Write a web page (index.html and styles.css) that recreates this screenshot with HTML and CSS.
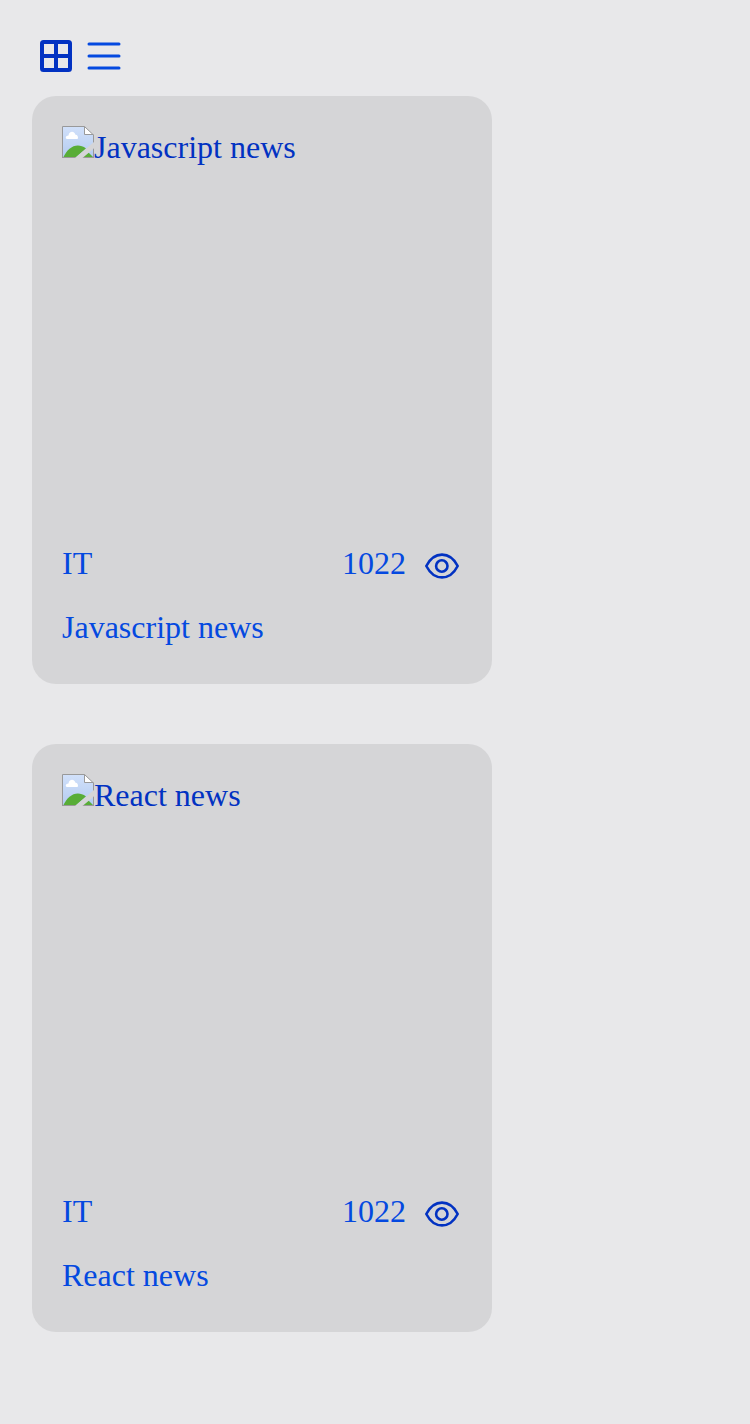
FILE: index.html
```html
<!DOCTYPE html>
<html lang="en">
<head>
<meta charset="utf-8">
<title>Articles</title>
<link rel="stylesheet" href="styles.css">
</head>
<body>
<svg class="symbols" aria-hidden="true">
  <defs>
    <linearGradient id="sky" x1="0" y1="0" x2="0" y2="1">
      <stop offset="0" stop-color="#d2e1fa"/>
      <stop offset="1" stop-color="#b3cbf0"/>
    </linearGradient>
    <symbol id="picture" viewBox="0 0 32 32">
      <path d="M0 0H22L32 10V32H0Z" fill="url(#sky)"/>
      <path d="M5 13C3 12.500 3.500 9.500 6.500 9.500C7 4.800 12.500 4.800 13.200 8.500C15.500 8.500 16.800 11.500 15.500 13Z" fill="#fff"/>
      <path d="M1 32C6 21 15 16 24 22.500L13 32Z" fill="#58ad37"/>
      <path d="M19 32L26.500 26.500L31 31V32Z" fill="#58ad37"/>
      <path d="M22.500 1V8.500H31Z" fill="#fff"/>
      <path d="M.5 32V.5H22.500L31.500 9V32M22.500 .5V8.500H31.500M0 31.500H32" fill="none" stroke="#999"/>
      <path d="M13 32L23 23.500L32 16V22.300L20.500 32Z" fill="#d5d5d7"/>
    </symbol>
    <symbol id="eye" viewBox="0 0 40 40">
      <path d="M4.300 20C8 12.800 13.500 8.600 20 8.600S32 12.800 35.700 20C32 27.200 26.500 31.400 20 31.400S8 27.200 4.300 20Z" fill="none" stroke="#0232c2" stroke-width="2.600" stroke-linejoin="round"/>
      <circle cx="19.800" cy="20" r="5.700" fill="none" stroke="#0232c2" stroke-width="2.600"/>
    </symbol>
  </defs>
</svg>
<main class="page">
  <div class="views">
    <svg class="view-icon" viewBox="0 0 40 40"><rect x="6" y="6" width="28" height="28" rx="1.500" fill="none" stroke="#0232c2" stroke-width="4"/><path d="M20 6V34M6 20H34" fill="none" stroke="#0232c2" stroke-width="4"/></svg>
    <svg class="view-icon" viewBox="0 0 40 40"><path d="M5 8H35M5 20H35M5 32H35" fill="none" stroke="#0449e0" stroke-width="3" stroke-linecap="round"/></svg>
  </div>
  <article class="card">
    <div class="cover"><svg class="picture"><use href="#picture"/></svg><span>Javascript news</span></div>
    <div class="info"><span>IT</span><span class="count">1022</span><svg class="eye"><use href="#eye"/></svg></div>
    <div class="title">Javascript news</div>
  </article>
  <article class="card">
    <div class="cover"><svg class="picture"><use href="#picture"/></svg><span>React news</span></div>
    <div class="info"><span>IT</span><span class="count">1022</span><svg class="eye"><use href="#eye"/></svg></div>
    <div class="title">React news</div>
  </article>
</main>
</body>
</html>
```
FILE: styles.css
```css
body {
  margin: 0;
  background: #e8e8ea;
  color: #0449e0;
  font: 32px/32px "Liberation Serif", serif;
}
.symbols {
  position: absolute;
  width: 0;
  height: 0;
}
.page {
  box-sizing: border-box;
  min-height: 1424px;
  padding: 36px 32px 32px;
}
.views {
  display: flex;
  gap: 8px;
  padding: 0 4px;
  height: 60px;
}
.view-icon {
  width: 40px;
  height: 40px;
}
.card {
  box-sizing: border-box;
  width: 460px;
  height: 588px;
  margin-bottom: 60px;
  padding: 30px;
  border-radius: 24px;
  background: #d5d5d7;
}
.cover {
  display: flex;
  height: 400px;
  color: #0232c2;
}
.cover span {
  padding-top: 5px;
}
.picture {
  width: 32px;
  height: 32px;
}
.info {
  display: flex;
  height: 64px;
  padding-top: 21px;
  box-sizing: border-box;
}
.count {
  margin-left: auto;
}
.eye {
  width: 40px;
  height: 40px;
  margin: -1px 0 0 16px;
}
.title {
  padding-top: 21px;
}
```
